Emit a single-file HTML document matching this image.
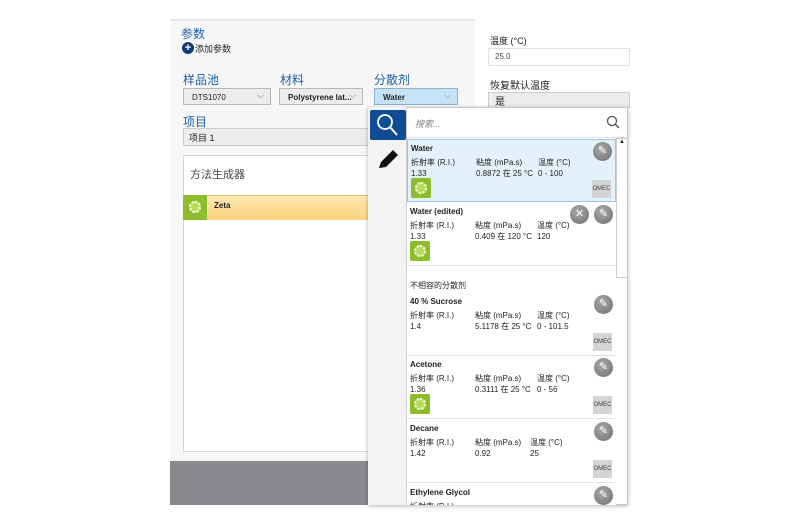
<!DOCTYPE html>
<html><head><meta charset="utf-8"><style>
*{margin:0;padding:0;box-sizing:border-box}
body{width:800px;height:523px;background:#fff;position:relative;overflow:hidden;font-family:"Liberation Sans","Noto Sans CJK SC",sans-serif;color:#222}
.a{position:absolute}
.lbl{color:#1d5fa6;font-size:12px}
.sel{border:1px solid #b8b8b8;background:#ececec;font-size:8px;font-weight:bold;padding:4px 0 0 8px;height:17px}
.sel:after{content:"⌵";position:absolute;right:6px;top:1px;color:#777;font-weight:normal;font-size:9px}
.item{position:absolute;left:407px;width:209px;border-bottom:1px solid #e3e3e3;font-size:8px;background:#fff}
.item b{position:absolute;left:3px;top:4px;font-size:8px}
.item .c{position:absolute;top:17px;font-size:8px;line-height:11px;white-space:nowrap}
.ring{position:absolute;left:3px;width:20px;height:20px;background:#8cbd2a;border-radius:2px}
.ring:after{content:"";position:absolute;left:4px;top:4px;width:8px;height:8px;border:2px dotted #fff;border-radius:50%;background:#b8dc5a}
.pen{position:absolute;right:3px;top:2px;width:19px;height:19px;border-radius:50%;background:radial-gradient(circle at 40% 35%,#a8a8a8,#6e6e6e);color:#fff;font-size:11px;text-align:center;line-height:19px}
.om{position:absolute;right:4px;width:19px;height:18px;background:#d4d4d4;font-size:6px;line-height:18px;text-align:center;color:#444}
</style></head><body>
<div class="a" style="left:170px;top:19px;width:305px;height:442px;background:#f7f7f7;border-top:2px solid #e6e6e6"></div>
<div class="a lbl" style="left:181px;top:25px">参数</div>
<div class="a" style="left:182px;top:42px;width:12px;height:12px;border-radius:50%;background:#123c72;color:#fff;font-size:11px;line-height:12px;text-align:center;font-weight:bold">+</div>
<div class="a" style="left:195px;top:42px;font-size:9px">添加参数</div>
<div class="a lbl" style="left:183px;top:71px">样品池</div>
<div class="a lbl" style="left:280px;top:71px">材料</div>
<div class="a lbl" style="left:374px;top:71px">分散剂</div>
<div class="a sel" style="left:183px;top:88px;width:88px;font-weight:normal">DTS1070</div>
<div class="a sel" style="left:279px;top:88px;width:84px">Polystyrene lat...</div>
<div class="a sel" style="left:374px;top:88px;width:84px;background:#c6e3f5;border-color:#8fb3cc">Water</div>
<div class="a lbl" style="left:183px;top:113px">项目</div>
<div class="a" style="left:183px;top:128px;width:200px;height:18px;background:#ececec;border:1px solid #ccc;font-size:9px;padding:2px 0 0 5px">项目 1</div>
<div class="a" style="left:183px;top:155px;width:200px;height:297px;background:#fff;border:1px solid #d6d6d6"></div>
<div class="a" style="left:190px;top:166px;font-size:11px;color:#444">方法生成器</div>
<div class="a" style="left:183px;top:195px;width:200px;height:25px;background:linear-gradient(#fde8b4,#fbd27a);border-top:1px solid #f5c463"></div>
<div class="a" style="left:183px;top:195px;width:24px;height:25px;background:#8cbd2a"></div>
<div class="a ring" style="left:185px;top:197px;background:none"></div>
<div class="a" style="left:214px;top:201px;font-size:8px;font-weight:bold">Zeta</div>
<div class="a" style="left:170px;top:461px;width:198px;height:44px;background:#88898d"></div>
<div class="a" style="left:490px;top:34px;font-size:9px">温度 (°C)</div>
<div class="a" style="left:488px;top:48px;width:142px;height:18px;border:1px solid #e0e0e0;font-size:8px;padding:3px 0 0 6px;color:#444">25.0</div>
<div class="a" style="left:490px;top:77px;font-size:10px">恢复默认温度</div>
<div class="a" style="left:488px;top:92px;width:142px;height:16px;background:#ececec;border:1px solid #ccc;font-size:10px;padding:0 0 0 6px">是</div>
<!-- popup -->
<div class="a" style="left:368px;top:107px;width:260px;height:398px;background:#fff;border:1px solid #c8c8c8;box-shadow:0 1px 4px rgba(0,0,0,.3)"></div>
<div class="a" style="left:368px;top:107px;width:39px;height:398px;background:#f3f3f3;border-right:1px solid #ccc"></div>
<div class="a" style="left:370px;top:110px;width:36px;height:30px;background:#0f4c94;border-radius:2px">
<svg width="36" height="30"><circle cx="15" cy="12" r="7" fill="none" stroke="#fff" stroke-width="1.8"/><line x1="20" y1="17" x2="27" y2="25" stroke="#fff" stroke-width="2"/></svg></div>
<svg class="a" style="left:376px;top:148px" width="24" height="22"><path d="M3 20 L5 14 L17 2 L22 7 L10 19 Z" fill="#111"/></svg>
<div class="a" style="left:415px;top:117px;font-size:9px;color:#888;font-style:italic">搜索...</div>
<svg class="a" style="left:606px;top:115px" width="14" height="14"><circle cx="6" cy="6" r="4.5" fill="none" stroke="#555" stroke-width="1.3"/><line x1="9" y1="9" x2="13" y2="13" stroke="#555" stroke-width="1.5"/></svg>
<div class="a" style="left:407px;top:137px;width:221px;border-top:1px solid #ddd"></div>
<div class="a" style="left:616px;top:138px;width:12px;height:140px;background:#fff;border:1px solid #ccc;font-size:6px;text-align:center">▲</div>
<div class="item" style="top:139px;height:63px;background:#e3f1fb;border:1px solid #9cc6e6"><b>Water</b>
<div class="c" style="left:3px">折射率 (R.I.)<br>1.33</div><div class="c" style="left:68px">粘度 (mPa.s)<br>0.8872 在 25 °C</div><div class="c" style="left:130px">温度 (°C)<br>0 - 100</div>
<div class="ring" style="top:38px"></div><div class="pen">✎</div><div class="om" style="top:40px">OMEC</div></div>
<div class="item" style="top:203px;height:63px"><b>Water (edited)</b>
<div class="c" style="left:3px">折射率 (R.I.)<br>1.33</div><div class="c" style="left:68px">粘度 (mPa.s)<br>0.409 在 120 °C</div><div class="c" style="left:130px">温度 (°C)<br>120</div>
<div class="ring" style="top:38px"></div><div class="pen">✎</div><div class="pen" style="right:27px">✕</div></div>
<div class="a" style="left:410px;top:280px;font-size:8px">不相容的分散剂</div>
<div class="item" style="top:293px;height:63px"><b>40 % Sucrose</b>
<div class="c" style="left:3px">折射率 (R.I.)<br>1.4</div><div class="c" style="left:68px">粘度 (mPa.s)<br>5.1178 在 25 °C</div><div class="c" style="left:130px">温度 (°C)<br>0 - 101.5</div>
<div class="pen">✎</div><div class="om" style="top:40px">OMEC</div></div>
<div class="item" style="top:356px;height:63px"><b>Acetone</b>
<div class="c" style="left:3px">折射率 (R.I.)<br>1.36</div><div class="c" style="left:68px">粘度 (mPa.s)<br>0.3111 在 25 °C</div><div class="c" style="left:130px">温度 (°C)<br>0 - 56</div>
<div class="ring" style="top:38px"></div><div class="pen">✎</div><div class="om" style="top:40px">OMEC</div></div>
<div class="item" style="top:420px;height:63px"><b>Decane</b>
<div class="c" style="left:3px">折射率 (R.I.)<br>1.42</div><div class="c" style="left:68px">粘度 (mPa.s)<br>0.92</div><div class="c" style="left:123px">温度 (°C)<br>25</div>
<div class="pen">✎</div><div class="om" style="top:40px">OMEC</div></div>
<div class="item" style="top:484px;height:21px;overflow:hidden;border:none"><b>Ethylene Glycol</b>
<div class="c" style="left:3px">折射率 (R.I.)</div><div class="pen">✎</div></div>
</body></html>
